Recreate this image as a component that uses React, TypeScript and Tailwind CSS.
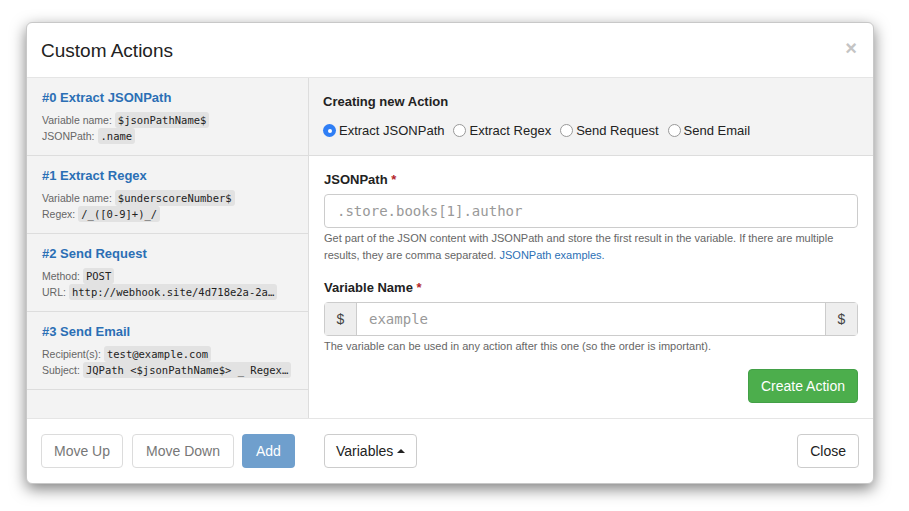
import React from "react";

const sans = { fontFamily: '"Liberation Sans", Arial, sans-serif' };
const mono = { fontFamily: '"DejaVu Sans Mono", "Liberation Mono", monospace' };

function Code({ children, className = "" }: { children: React.ReactNode; className?: string }) {
  return (
    <code
      className={`inline-block rounded-[3px] bg-[#e2e2e2] px-[3px] text-[10.5px] leading-[16px] text-[#222] align-middle ${className}`}
      style={mono}
    >
      {children}
    </code>
  );
}

function Item({ title, lines }: { title: string; lines: [string, string][] }) {
  return (
    <div className="h-[78px] border-b border-[#dddddd] px-[15px] pt-[12px]">
      <div className="text-[13px] font-bold leading-[16px] text-[#2b6fb5]">{title}</div>
      <div className="mt-[6px] text-[10.5px] leading-[16px] text-[#666]">
        {lines.map(([label, value], i) => (
          <div key={i} className="flex h-[16px] items-center whitespace-nowrap">
            <span>{label}</span>
            <Code className="ml-[3px]">{value}</Code>
          </div>
        ))}
      </div>
    </div>
  );
}

function Radio({ checked, label }: { checked?: boolean; label: string }) {
  return (
    <label className="mr-[9px] flex items-center">
      {checked ? (
        <span className="flex h-[13px] w-[13px] items-center justify-center rounded-full bg-[#2f7ef5]">
          <span className="h-[4px] w-[4px] rounded-full bg-white" />
        </span>
      ) : (
        <span className="h-[13px] w-[13px] rounded-full border border-[#999] bg-white" />
      )}
      <span className="ml-[3px] text-[13px] text-[#222]">{label}</span>
    </label>
  );
}

export default function App() {
  return (
    <div className="min-h-[511px] w-[909px] bg-white pl-[26px] pt-[22px]" style={sans}>
      <div className="w-[848px] overflow-hidden rounded-[6px] border border-[#c8c8c8] bg-white shadow-[0_5px_15px_rgba(0,0,0,0.5)]">
        {/* Header */}
        <div className="flex h-[55px] items-center justify-between border-b border-[#e5e5e5] pl-[14px] pr-[16px]">
          <h4 className="text-[19px] leading-none text-[#222]">Custom Actions</h4>
          <span className="mb-[4px] text-[20px] font-bold leading-none text-[#c4c4c4]">×</span>
        </div>
        {/* Body */}
        <div className="flex h-[341px] border-b border-[#e5e5e5]">
          <div className="w-[282px] shrink-0 border-r border-[#dddddd] bg-[#f3f3f3]">
            <Item
              title="#0 Extract JSONPath"
              lines={[
                ["Variable name:", "$jsonPathName$"],
                ["JSONPath:", ".name"],
              ]}
            />
            <Item
              title="#1 Extract Regex"
              lines={[
                ["Variable name:", "$underscoreNumber$"],
                ["Regex:", "/_([0-9]+)_/"],
              ]}
            />
            <Item
              title="#2 Send Request"
              lines={[
                ["Method:", "POST"],
                ["URL:", "http://webhook.site/4d718e2a-2a…"],
              ]}
            />
            <Item
              title="#3 Send Email"
              lines={[
                ["Recipient(s):", "test@example.com"],
                ["Subject:", "JQPath <$jsonPathName$> _ Regex…"],
              ]}
            />
          </div>
          <div className="flex-1">
            <div className="h-[78px] border-b border-[#dddddd] bg-[#f3f3f3] px-[14px] pt-[16px]">
              <div className="text-[13px] font-bold leading-[16px] text-[#222]">Creating new Action</div>
              <div className="mt-[11px] flex items-center">
                <Radio checked label="Extract JSONPath" />
                <Radio label="Extract Regex" />
                <Radio label="Send Request" />
                <Radio label="Send Email" />
              </div>
            </div>
            <div className="px-[15px] pt-[16px]">
              <div className="text-[13px] font-bold leading-[16px] text-[#222]">
                JSONPath <span className="text-[#b3262b]">*</span>
              </div>
              <div
                className="mt-[6px] flex h-[34px] items-center rounded-[4px] border border-[#cccccc] px-[12px] text-[14px] text-[#999]"
                style={mono}
              >
                .store.books[1].author
              </div>
              <p className="mt-[2px] text-[11px] leading-[17px] text-[#666]">
                Get part of the JSON content with JSONPath and store the first result in the variable. If there are multiple results, they are comma separated.{" "}
                <span className="text-[#2b6fb5]">JSONPath examples.</span>
              </p>
              <div className="mt-[16px] text-[13px] font-bold leading-[16px] text-[#222]">
                Variable Name <span className="text-[#b3262b]">*</span>
              </div>
              <div className="mt-[6px] flex h-[34px] rounded-[4px] border border-[#cccccc]">
                <span className="flex w-[32px] items-center justify-center border-r border-[#cccccc] bg-[#eeeeee] text-[14px] text-[#444]">$</span>
                <span className="flex flex-1 items-center px-[12px] text-[14px] text-[#999]" style={mono}>
                  example
                </span>
                <span className="flex w-[32px] items-center justify-center border-l border-[#cccccc] bg-[#eeeeee] text-[14px] text-[#444]">$</span>
              </div>
              <p className="mt-[2px] text-[11px] leading-[17px] text-[#666]">
                The variable can be used in any action after this one (so the order is important).
              </p>
              <div className="mt-[14px] flex justify-end">
                <button className="h-[34px] rounded-[4px] border border-[#43a047] bg-[#4cae4c] px-[12px] text-[14px] text-white">
                  Create Action
                </button>
              </div>
            </div>
          </div>
        </div>
        {/* Footer */}
        <div className="flex h-[64px] items-start pt-[15px]">
          <div className="flex w-[283px] shrink-0 gap-[9px] pl-[14px]">
            <button className="h-[34px] rounded-[4px] border border-[#dcdcdc] px-[12px] text-[14px] text-[#777]">Move Up</button>
            <button className="h-[34px] rounded-[4px] border border-[#dcdcdc] px-[13px] text-[14px] text-[#777]">Move Down</button>
            <button className="-ml-[1px] h-[34px] rounded-[4px] bg-[#6f9fcd] px-[14px] text-[14px] text-white">Add</button>
          </div>
          <div className="flex flex-1 justify-between pl-[14px] pr-[14px]">
            <button className="flex h-[34px] items-center rounded-[4px] border border-[#cccccc] px-[11px] text-[14px] text-[#222]">
              Variables
              <span className="ml-[4px] inline-block h-0 w-0 border-x-[4px] border-b-[4px] border-x-transparent border-b-[#222]" />
            </button>
            <button className="h-[34px] rounded-[4px] border border-[#cccccc] px-[12px] text-[14px] text-[#222]">Close</button>
          </div>
        </div>
      </div>
    </div>
  );
}
